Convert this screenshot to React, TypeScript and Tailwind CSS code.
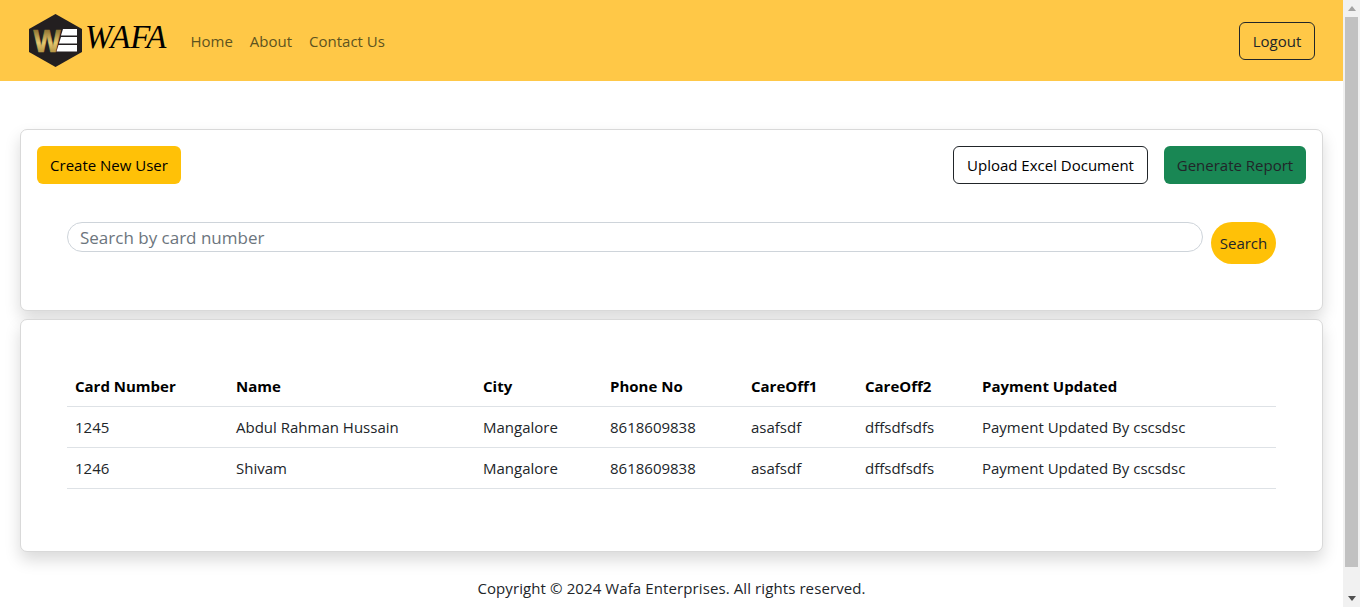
const columns = [
  { label: 'Card Number', width: 'w-[161px]' },
  { label: 'Name', width: 'w-[247px]' },
  { label: 'City', width: 'w-[127px]' },
  { label: 'Phone No', width: 'w-[141px]' },
  { label: 'CareOff1', width: 'w-[114px]' },
  { label: 'CareOff2', width: 'w-[117px]' },
  { label: 'Payment Updated', width: '' },
];

const rows = [
  ['1245', 'Abdul Rahman Hussain', 'Mangalore', '8618609838', 'asafsdf', 'dffsdfsdfs', 'Payment Updated By cscsdsc'],
  ['1246', 'Shivam', 'Mangalore', '8618609838', 'asafsdf', 'dffsdfsdfs', 'Payment Updated By cscsdsc'],
];

function Logo() {
  return (
    <svg width="55" height="53" viewBox="0 0 55 53" className="shrink-0">
      <defs>
        <linearGradient id="gold" gradientUnits="userSpaceOnUse" x1="0" y1="15" x2="0" y2="38">
          <stop offset="0" stopColor="#8a6f2e" />
          <stop offset="0.6" stopColor="#e6c86e" />
          <stop offset="1" stopColor="#b59545" />
        </linearGradient>
      </defs>
      <polygon points="27.5,0 54,15 54,38 27.5,53 1,38 1,15" fill="#231f20" />
      <text x="5.5" y="38" fontFamily="Liberation Sans" fontWeight="700" fontSize="32" textLength="27" lengthAdjust="spacingAndGlyphs" fill="url(#gold)" stroke="url(#gold)" strokeWidth="0.7">W</text>
      <polygon points="35,15 49,15 49,21.5 33,21.5" fill="#ffffff" />
      <polygon points="33,23 49,23 49,29.5 31,29.5" fill="#ffffff" />
      <polygon points="30.5,31 49,31 49,37.5 28.5,37.5" fill="#ffffff" />
    </svg>
  );
}

export default function App() {
  return (
    <div className="flex h-[607px] overflow-hidden bg-white text-[15px] text-[#212529] font-['Open_Sans','Noto_Sans',sans-serif]">
      <div className="flex-1 min-w-0">
        {/* Navbar */}
        <header className="h-[81px] bg-[#ffc847] flex items-center pl-[28px] pr-[28px]">
          <Logo />
          <span className="ml-[2px] mr-[24px] mb-[6px] font-['Liberation_Serif',serif] italic text-[33px] leading-none text-black">WAFA</span>
          <nav className="flex gap-[17px] pt-[2px] text-[#5d5320]">
            <a>Home</a>
            <a>About</a>
            <a>Contact Us</a>
          </nav>
          <button className="ml-auto h-[38px] w-[76px] pt-[2px] border border-[#212529] rounded-[6px]">Logout</button>
        </header>

        <main className="px-[20px] pt-[48px]">
          {/* Actions and search */}
          <section className="h-[182px] bg-white border border-[#d9d9d9] rounded-[7px] shadow-[0_8px_16px_rgba(0,0,0,0.15)] p-[16px]">
            <div className="flex items-center">
              <button className="h-[38px] w-[144px] bg-[#ffc107] text-black rounded-[6px]">Create New User</button>
              <button className="ml-auto h-[38px] w-[195px] bg-white text-black border border-[#212529] rounded-[6px]">Upload Excel Document</button>
              <button className="ml-[16px] h-[38px] w-[142px] bg-[#198754] rounded-[6px]">Generate Report</button>
            </div>
            <div className="flex items-start mt-[38px] ml-[30px] mr-[30px] gap-[8px]">
              <input
                placeholder="Search by card number"
                className="flex-1 h-[30px] px-[12px] text-[17px] border border-[#ced4da] rounded-full placeholder:text-[#6c757d] outline-none"
              />
              <button className="h-[42px] w-[65px] bg-[#ffc107] rounded-full">Search</button>
            </div>
          </section>

          {/* Results table */}
          <section className="mt-[8px] h-[233px] bg-white border border-[#d9d9d9] rounded-[7px] shadow-[0_8px_16px_rgba(0,0,0,0.15)] pt-[46px] px-[46px]">
            <table className="w-full table-fixed border-collapse">
              <thead>
                <tr className="border-b border-[#dee2e6]">
                  {columns.map((col) => (
                    <th key={col.label} className={`${col.width} h-[40px] px-[8px] text-left font-bold text-black`}>{col.label}</th>
                  ))}
                </tr>
              </thead>
              <tbody>
                {rows.map((row) => (
                  <tr key={row[0]} className="border-b border-[#dee2e6]">
                    {row.map((cell, i) => (
                      <td key={i} className="h-[41px] px-[8px] pt-[2px]">{cell}</td>
                    ))}
                  </tr>
                ))}
              </tbody>
            </table>
          </section>
        </main>

        <footer className="mt-[25px] text-center tracking-[0.1px]">Copyright © 2024 Wafa Enterprises. All rights reserved.</footer>
      </div>

      {/* Scrollbar */}
      <div className="w-[17px] shrink-0 bg-[#f1f1f1] flex flex-col items-center">
        <div className="h-[17px] flex items-center justify-center">
          <div className="w-0 h-0 border-x-[4px] border-x-transparent border-b-[5px] border-b-[#a3a3a3]" />
        </div>
        <div className="w-[13px] h-[550px] bg-[#c1c1c1]" />
        <div className="mt-auto h-[17px] flex items-center justify-center">
          <div className="w-0 h-0 border-x-[4px] border-x-transparent border-t-[5px] border-t-[#505050]" />
        </div>
      </div>
    </div>
  );
}
